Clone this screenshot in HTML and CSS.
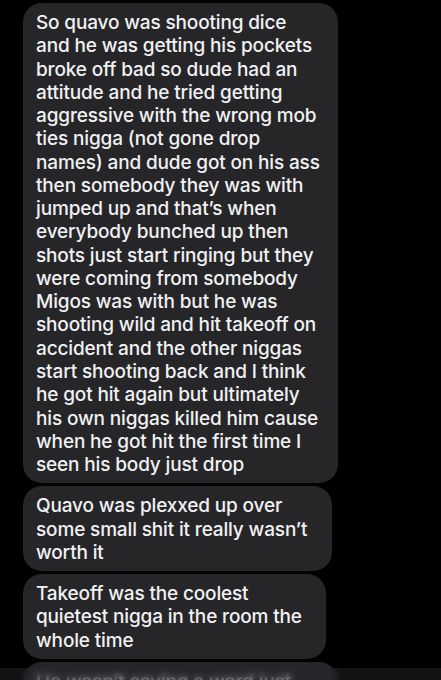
FILE: index.html
```html
<!DOCTYPE html>
<html lang="en">
<head>
  <meta charset="UTF-8">
  <title>Messages</title>
  <link rel="stylesheet" href="styles.css">
</head>
<body>

  <div class="thread">
    <div class="bubble bubble-long">
      So quavo was shooting dice<br>
      and he was getting his pockets<br>
      broke off bad so dude had an<br>
      attitude and he tried getting<br>
      aggressive with the wrong mob<br>
      ties nigga (not gone drop<br>
      names) and dude got on his ass<br>
      then somebody they was with<br>
      jumped up and that’s when<br>
      everybody bunched up then<br>
      shots just start ringing but they<br>
      were coming from somebody<br>
      Migos was with but he was<br>
      shooting wild and hit takeoff on<br>
      accident and the other niggas<br>
      start shooting back and I think<br>
      he got hit again but ultimately<br>
      his own niggas killed him cause<br>
      when he got hit the first time I<br>
      seen his body just drop
    </div>

    <div class="bubble bubble-mid">
      Quavo was plexxed up over<br>
      some small shit it really wasn’t<br>
      worth it
    </div>

    <div class="bubble bubble-short">
      Takeoff was the coolest<br>
      quietest nigga in the room the<br>
      whole time
    </div>

    <div class="bubble bubble-long">
      He wasn’t saying a word just
    </div>
  </div>

  <div class="bottom-bar"></div>

</body>
</html>
```

FILE: styles.css
```css
* {
  box-sizing: border-box;
}

body {
  margin: 0;
  height: 100vh;
  background: #000;
  font-family: 'Inter', 'Noto Sans', sans-serif;
  overflow: hidden;
  position: relative;
}

.thread {
  display: flex;
  flex-direction: column;
  align-items: flex-start;
  gap: 3px;
  padding: 3px 0 0 23px;
}

.bubble {
  background: #262629;
  color: #f1f1f3;
  border-radius: 19px;
  padding: 8px 13px 7px;
  font-size: 19px;
  font-weight: 500;
  letter-spacing: -0.15px;
  line-height: 23.26px;
  white-space: nowrap;
}

.bubble-long {
  width: 315px;
}

.bubble-mid {
  width: 309px;
}

.bubble-short {
  width: 303px;
}

/* translucent input area over the last message */
.bottom-bar {
  position: absolute;
  left: 0;
  right: 0;
  bottom: 0;
  height: 12px;
  background: rgba(40, 40, 46, 0.45);
  backdrop-filter: blur(3px);
}
```
